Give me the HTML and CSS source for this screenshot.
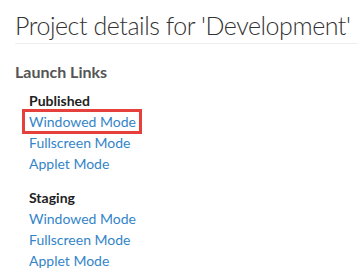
FILE: index.html
```html
<!DOCTYPE html>
<html lang="en">

<head>
    <meta charset="UTF-8">
    <meta name="viewport" content="width=device-width, initial-scale=1.0">
    <title>Project details</title>

    <link rel="stylesheet" href="styles.css">
</head>

<body>
    <div class="page">
        <h1 class="page-title">Project details for 'Development'</h1>

        <h2 class="section-title">Launch Links</h2>

        <div class="launch-group">
            <h3 class="group-title">Published</h3>
            <a class="launch-link highlighted" href="#">Windowed Mode</a>
            <a class="launch-link" href="#">Fullscreen Mode</a>
            <a class="launch-link" href="#">Applet Mode</a>
        </div>

        <div class="launch-group">
            <h3 class="group-title">Staging</h3>
            <a class="launch-link" href="#">Windowed Mode</a>
            <a class="launch-link" href="#">Fullscreen Mode</a>
            <a class="launch-link" href="#">Applet Mode</a>
        </div>
    </div>
</body>

</html>
```

FILE: styles.css
```css
* {
    --link: rgb(51, 133, 200);
    --title: rgb(51, 51, 51);
    --red: rgb(229, 64, 60);
}

body {
    background-color: white;
    font-family: Lato, "Open Sans", sans-serif;
    margin: 0;
    overflow: hidden;
}

.page {
    padding: 7px 0 0 15px;
}

.page-title {
    border-bottom: 1px solid rgb(238, 238, 238);
    color: var(--title);
    font-size: 25px;
    font-weight: 300;
    letter-spacing: -0.45px;
    line-height: 36px;
    margin: 0;
    white-space: nowrap;
}

.section-title {
    color: rgb(85, 85, 85);
    font-size: 16px;
    font-weight: 700;
    line-height: 20px;
    margin: 18px 0 0;
}

.launch-group {
    display: flex;
    flex-direction: column;
    align-items: flex-start;
    margin: 8px 0 0 14px;
}

.launch-group + .launch-group {
    margin-top: 13px;
}

.group-title {
    color: rgb(34, 34, 34);
    font-size: 14px;
    font-weight: 700;
    line-height: 21px;
    margin: 0;
}

.launch-link {
    color: var(--link);
    font-size: 14px;
    line-height: 21px;
    text-decoration: none;
}

.highlighted {
    margin: 0 -5px;
    outline: 3px solid var(--red);
    outline-offset: -1px;
    padding: 0 4px 0 5px;
}
```
